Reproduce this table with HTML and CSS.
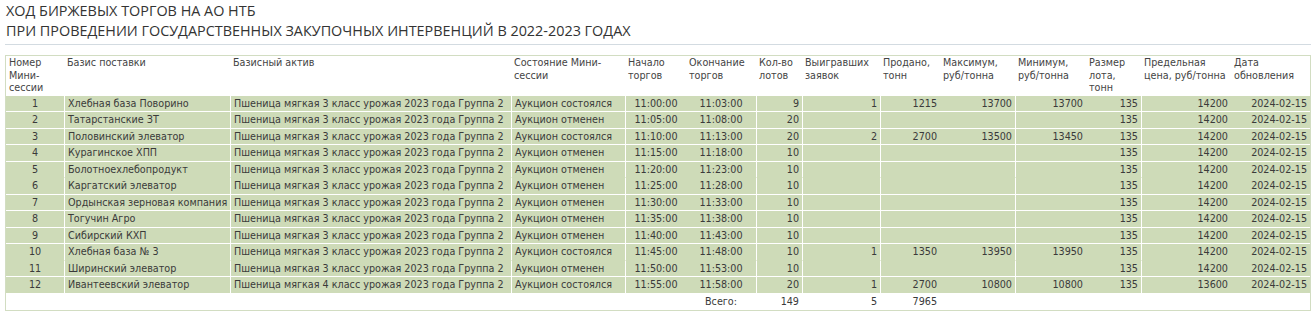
FILE: index.html
```html
<!DOCTYPE html>
<html lang="ru">
<head>
<meta charset="utf-8">
<title>Ход биржевых торгов</title>
<link rel="stylesheet" href="styles.css">
</head>
<body>
<div class="page">
  <h1 class="title">ХОД БИРЖЕВЫХ ТОРГОВ НА АО НТБ<br>ПРИ ПРОВЕДЕНИИ ГОСУДАРСТВЕННЫХ ЗАКУПОЧНЫХ ИНТЕРВЕНЦИЙ В 2022-2023 ГОДАХ</h1>
  <div class="rule"></div>
  <table class="grid">
    <colgroup>
      <col class="w1"><col class="w2"><col class="w3"><col class="w4"><col class="w5"><col class="w6"><col class="w7">
      <col class="w8"><col class="w9"><col class="w10"><col class="w11"><col class="w12"><col class="w13"><col class="w14">
    </colgroup>
    <thead>
      <tr>
        <th>Номер<br>Мини-<br>сессии</th>
        <th>Базис поставки</th>
        <th>Базисный актив</th>
        <th>Состояние Мини-<br>сессии</th>
        <th>Начало<br>торгов</th>
        <th>Окончание<br>торгов</th>
        <th>Кол-во<br>лотов</th>
        <th>Выигравших<br>заявок</th>
        <th>Продано,<br>тонн</th>
        <th>Максимум,<br>руб/тонна</th>
        <th>Минимум,<br>руб/тонна</th>
        <th>Размер<br>лота,<br>тонн</th>
        <th>Предельная<br>цена, руб/тонна</th>
        <th>Дата<br>обновления</th>
      </tr>
    </thead>
    <tbody>
      <tr class="row"><td class="c">1</td><td class="bl">Хлебная база Поворино</td><td class="bl">Пшеница мягкая 3 класс урожая 2023 года Группа 2</td><td class="bl">Аукцион состоялся</td><td class="bl c">11:00:00</td><td class="c">11:03:00</td><td class="bl r">9</td><td class="bl r">1</td><td class="bl r">1215</td><td class="r">13700</td><td class="bl r">13700</td><td class="r">135</td><td class="bl r">14200</td><td class="r">2024-02-15</td></tr>
      <tr class="row"><td class="c">2</td><td class="bl">Татарстанские ЗТ</td><td class="bl">Пшеница мягкая 3 класс урожая 2023 года Группа 2</td><td class="bl">Аукцион отменен</td><td class="bl c">11:05:00</td><td class="c">11:08:00</td><td class="bl r">20</td><td class="bl r"></td><td class="bl r"></td><td class="r"></td><td class="bl r"></td><td class="r">135</td><td class="bl r">14200</td><td class="r">2024-02-15</td></tr>
      <tr class="row"><td class="c">3</td><td class="bl">Половинский элеватор</td><td class="bl">Пшеница мягкая 3 класс урожая 2023 года Группа 2</td><td class="bl">Аукцион состоялся</td><td class="bl c">11:10:00</td><td class="c">11:13:00</td><td class="bl r">20</td><td class="bl r">2</td><td class="bl r">2700</td><td class="r">13500</td><td class="bl r">13450</td><td class="r">135</td><td class="bl r">14200</td><td class="r">2024-02-15</td></tr>
      <tr class="row"><td class="c">4</td><td class="bl">Курагинское ХПП</td><td class="bl">Пшеница мягкая 3 класс урожая 2023 года Группа 2</td><td class="bl">Аукцион отменен</td><td class="bl c">11:15:00</td><td class="c">11:18:00</td><td class="bl r">10</td><td class="bl r"></td><td class="bl r"></td><td class="r"></td><td class="bl r"></td><td class="r">135</td><td class="bl r">14200</td><td class="r">2024-02-15</td></tr>
      <tr class="row"><td class="c">5</td><td class="bl">Болотноехлебопродукт</td><td class="bl">Пшеница мягкая 3 класс урожая 2023 года Группа 2</td><td class="bl">Аукцион отменен</td><td class="bl c">11:20:00</td><td class="c">11:23:00</td><td class="bl r">10</td><td class="bl r"></td><td class="bl r"></td><td class="r"></td><td class="bl r"></td><td class="r">135</td><td class="bl r">14200</td><td class="r">2024-02-15</td></tr>
      <tr class="row joined"><td class="c">6</td><td class="bl">Каргатский элеватор</td><td class="bl">Пшеница мягкая 3 класс урожая 2023 года Группа 2</td><td class="bl">Аукцион отменен</td><td class="bl c">11:25:00</td><td class="c">11:28:00</td><td class="bl r">10</td><td class="bl r"></td><td class="bl r"></td><td class="r"></td><td class="bl r"></td><td class="r">135</td><td class="bl r">14200</td><td class="r">2024-02-15</td></tr>
      <tr class="row"><td class="c">7</td><td class="bl">Ордынская зерновая компания</td><td class="bl">Пшеница мягкая 3 класс урожая 2023 года Группа 2</td><td class="bl">Аукцион отменен</td><td class="bl c">11:30:00</td><td class="c">11:33:00</td><td class="bl r">10</td><td class="bl r"></td><td class="bl r"></td><td class="r"></td><td class="bl r"></td><td class="r">135</td><td class="bl r">14200</td><td class="r">2024-02-15</td></tr>
      <tr class="row"><td class="c">8</td><td class="bl">Тогучин Агро</td><td class="bl">Пшеница мягкая 3 класс урожая 2023 года Группа 2</td><td class="bl">Аукцион отменен</td><td class="bl c">11:35:00</td><td class="c">11:38:00</td><td class="bl r">10</td><td class="bl r"></td><td class="bl r"></td><td class="r"></td><td class="bl r"></td><td class="r">135</td><td class="bl r">14200</td><td class="r">2024-02-15</td></tr>
      <tr class="row"><td class="c">9</td><td class="bl">Сибирский КХП</td><td class="bl">Пшеница мягкая 3 класс урожая 2023 года Группа 2</td><td class="bl">Аукцион отменен</td><td class="bl c">11:40:00</td><td class="c">11:43:00</td><td class="bl r">10</td><td class="bl r"></td><td class="bl r"></td><td class="r"></td><td class="bl r"></td><td class="r">135</td><td class="bl r">14200</td><td class="r">2024-02-15</td></tr>
      <tr class="row"><td class="c">10</td><td class="bl">Хлебная база № 3</td><td class="bl">Пшеница мягкая 3 класс урожая 2023 года Группа 2</td><td class="bl">Аукцион состоялся</td><td class="bl c">11:45:00</td><td class="c">11:48:00</td><td class="bl r">10</td><td class="bl r">1</td><td class="bl r">1350</td><td class="r">13950</td><td class="bl r">13950</td><td class="r">135</td><td class="bl r">14200</td><td class="r">2024-02-15</td></tr>
      <tr class="row joined"><td class="c">11</td><td class="bl">Ширинский элеватор</td><td class="bl">Пшеница мягкая 3 класс урожая 2023 года Группа 2</td><td class="bl">Аукцион отменен</td><td class="bl c">11:50:00</td><td class="c">11:53:00</td><td class="bl r">10</td><td class="bl r"></td><td class="bl r"></td><td class="r"></td><td class="bl r"></td><td class="r">135</td><td class="bl r">14200</td><td class="r">2024-02-15</td></tr>
      <tr class="row"><td class="c">12</td><td class="bl">Ивантеевский элеватор</td><td class="bl">Пшеница мягкая 4 класс урожая 2023 года Группа 2</td><td class="bl">Аукцион состоялся</td><td class="bl c">11:55:00</td><td class="c">11:58:00</td><td class="bl r">20</td><td class="bl r">1</td><td class="bl r">2700</td><td class="r">10800</td><td class="bl r">10800</td><td class="r">135</td><td class="bl r">13600</td><td class="r">2024-02-15</td></tr>
      <tr class="total"><td></td><td></td><td></td><td></td><td></td><td class="c">Всего:</td><td class="r">149</td><td class="r">5</td><td class="r">7965</td><td></td><td></td><td></td><td></td><td></td></tr>
    </tbody>
  </table>
</div>
</body>
</html>
```
FILE: styles.css
```css
html, body {
  margin: 0;
  padding: 0;
  background: #ffffff;
}

.page {
  padding: 0 0 0 5px;
}

.title {
  margin: 0;
  padding: 1px 0 0 1px;
  font-family: "Open Sans", "Noto Sans", sans-serif;
  font-weight: 400;
  font-size: 14.4px;
  line-height: 19.5px;
  color: #333333;
}

.rule {
  height: 1px;
  background: #d3dbe1;
  margin: 4px 0 10px 0;
}

.grid {
  table-layout: fixed;
  width: 1306px;
  border-collapse: separate;
  border-spacing: 0;
  border: 1px solid #d2ddc2;
  font-family: "DejaVu Sans Condensed", "DejaVu Sans", sans-serif;
  font-size: 10.7px;
  color: #3a3a3a;
}

.w1 { width: 58px; }
.w2 { width: 166px; }
.w3 { width: 281px; }
.w4 { width: 114px; }
.w5 { width: 61px; }
.w6 { width: 70px; }
.w7 { width: 46px; }
.w8 { width: 78px; }
.w9 { width: 60px; }
.w10 { width: 75px; }
.w11 { width: 71px; }
.w12 { width: 55px; }
.w13 { width: 90px; }
.w14 { width: 79px; }

.grid th {
  text-align: left;
  vertical-align: top;
  font-weight: 400;
  line-height: 12.5px;
  height: 38px;
  padding: 1px 3px 0 3px;
  white-space: nowrap;
  color: #444444;
  box-sizing: border-box;
}

.grid td {
  padding: 0 3px;
  height: 16.5px;
  line-height: 15px;
  white-space: nowrap;
  overflow: hidden;
  box-sizing: border-box;
  border-top: 1px solid #ffffff;
}

.row td {
  background: #cedbb8;
}

.row.joined td {
  border-top-color: #cedbb8;
}

.row td.bl {
  border-left: 1px solid #ffffff;
}

.total td {
  border-top-color: transparent;
  height: 17px;
}

.c { text-align: center; }
.r { text-align: right; }
```
